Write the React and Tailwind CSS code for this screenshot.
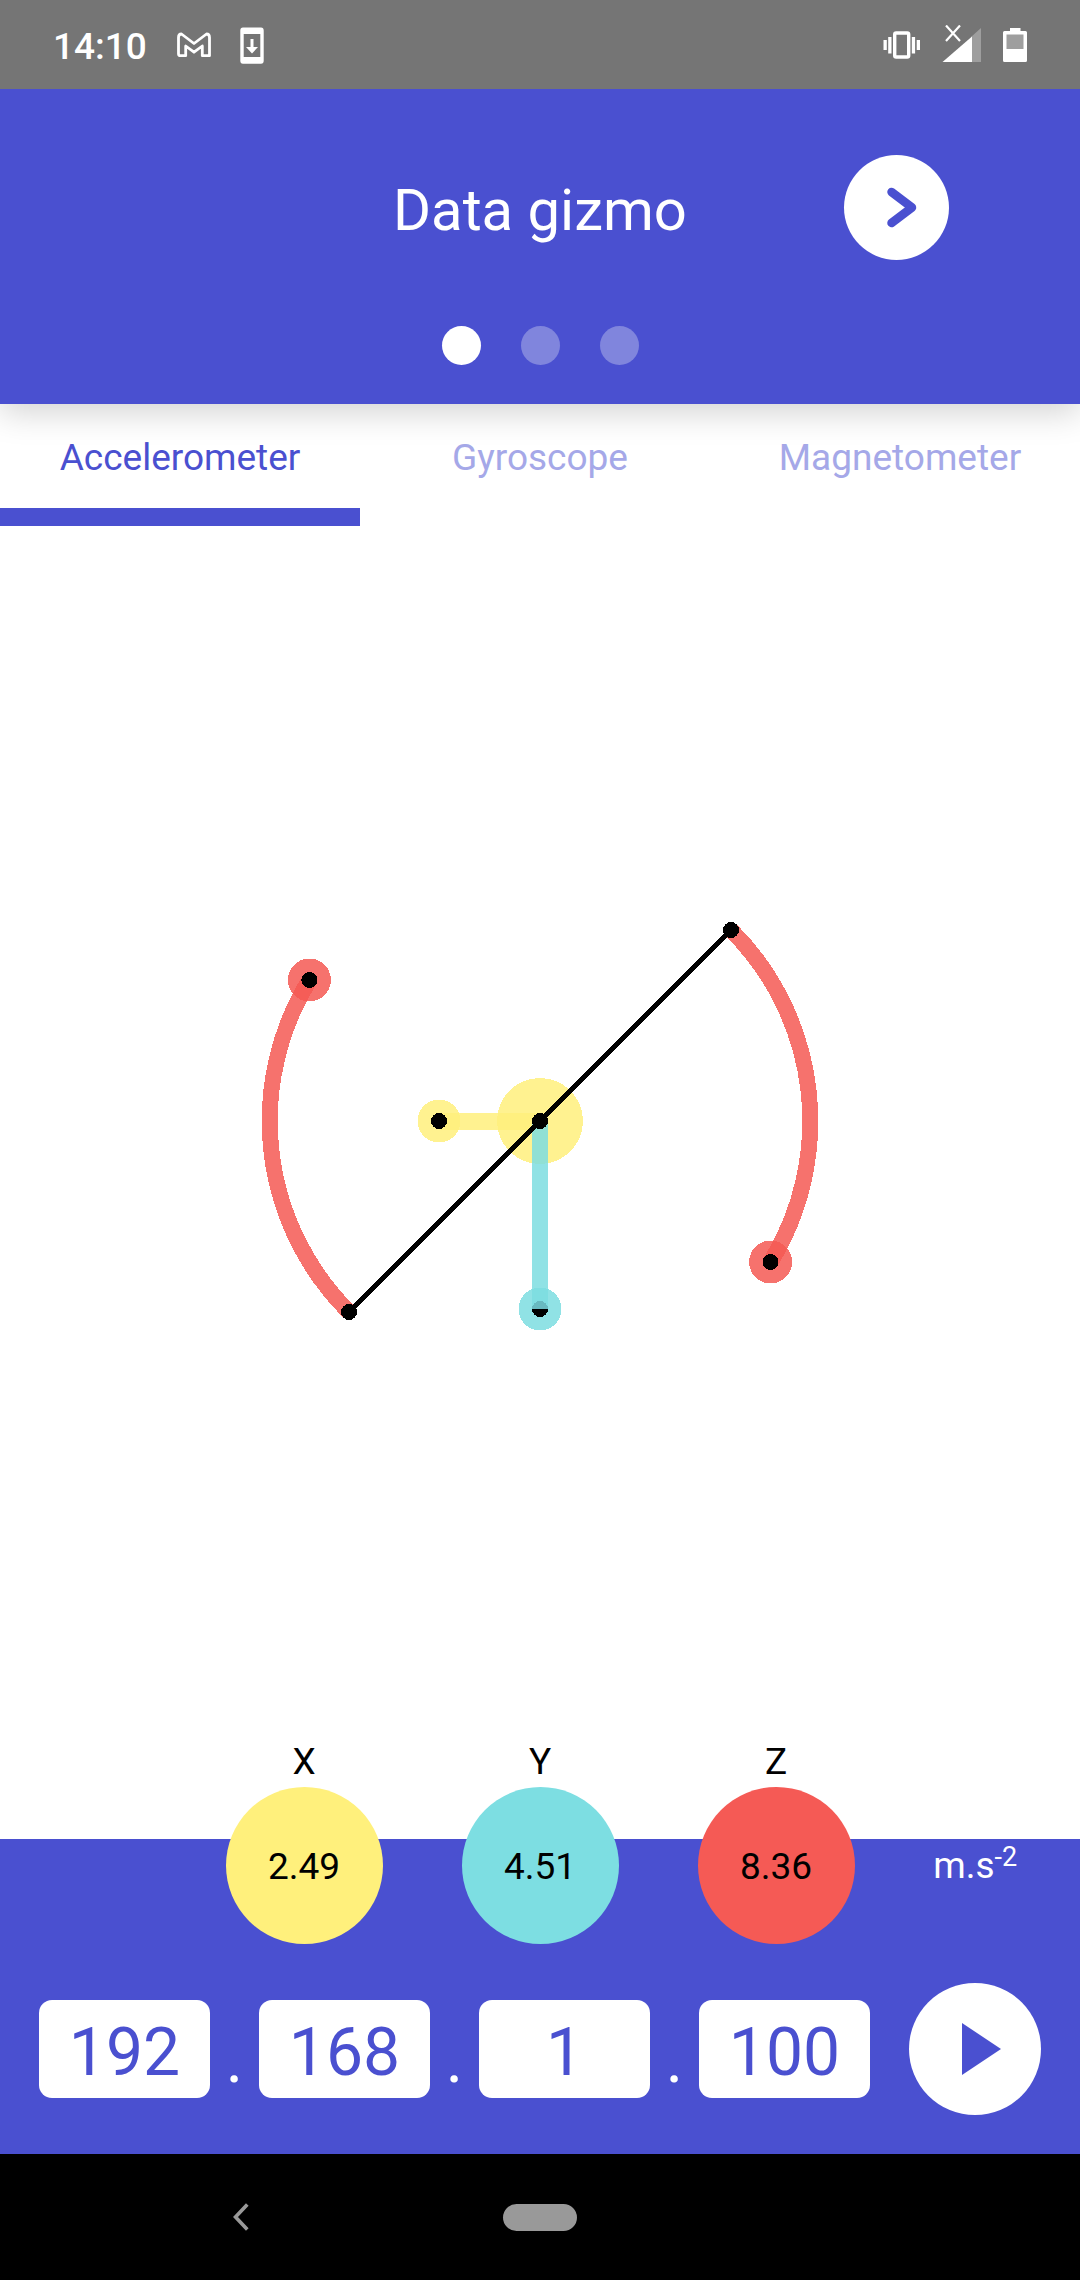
import React, { useState } from "react";

const TABS = ["Accelerometer", "Gyroscope", "Magnetometer"];

const READINGS = [
  { axis: "X", value: "2.49", color: "bg-[#fff07c]" },
  { axis: "Y", value: "4.51", color: "bg-[#7ddee2]" },
  { axis: "Z", value: "8.36", color: "bg-[#f55a55]" },
];

function GmailIcon() {
  return (
    <svg className="h-10 w-[34px]" viewBox="177 24 34 40" fill="none" aria-hidden="true">
      <path
        d="M178.500 36.500 Q178.500 33 181.500 33 L194 42.500 L206.500 33 Q209.500 33 209.500 36.500 V54.700 H202.300 V45 L194 51.200 L185.700 45 V54.700 H180.500 Q178.500 54.700 178.500 52.700 Z"
        stroke="#fff"
        strokeWidth="2.800"
        strokeLinejoin="round"
      />
    </svg>
  );
}

function DownloadIcon() {
  return (
    <svg className="h-10 w-6" viewBox="240 24 24 40" aria-hidden="true">
      <path
        fill="#fff"
        fillRule="evenodd"
        d="M243 26.500 H261 Q263.700 26.500 263.700 29.500 V59.700 Q263.700 62.700 261 62.700 H243 Q240.300 62.700 240.300 59.700 V29.500 Q240.300 26.500 243 26.500 Z M243.700 33 V56 H260.300 V33 Z"
      />
      <path fill="#fff" d="M250.500 38 H253.500 V46 H258 L252 52.500 L246 46 H250.500 Z" />
    </svg>
  );
}

function VibrateIcon() {
  return (
    <svg className="h-10 w-[38px]" viewBox="883.500 24 38 40" fill="#fff" aria-hidden="true">
      <rect x="884" y="39" width="3.300" height="10" />
      <rect x="888.700" y="36" width="3.300" height="16.500" />
      <rect x="912.300" y="36" width="3.300" height="16.500" />
      <rect x="917.200" y="39" width="3.300" height="10" />
      <rect x="895.200" y="32" width="14" height="24" rx="1.500" fill="none" stroke="#fff" strokeWidth="3.400" />
    </svg>
  );
}

function SignalIcon() {
  return (
    <svg className="h-10 w-10" viewBox="943 24 40 40" aria-hidden="true">
      <path fill="#9e9e9e" d="M982 27 V61 H972 V36 Z" />
      <path fill="#fff" d="M973 35.500 V61 H943.500 Z" />
      <path d="M947 24.500 L961 40 M961 24.500 L947 40" stroke="#fff" strokeWidth="2.200" />
    </svg>
  );
}

function BatteryIcon() {
  return (
    <svg className="h-10 w-6" viewBox="1003 24 24 40" aria-hidden="true">
      <path
        fill="#fff"
        d="M1010 27 H1020.500 V30 H1025.500 Q1027 30 1027 31.500 V59.500 Q1027 61 1025.500 61 H1004.500 Q1003 61 1003 59.500 V31.500 Q1003 30 1004.500 30 H1010 Z"
      />
      <rect x="1006.500" y="33.500" width="17" height="14.500" fill="#9e9e9e" />
    </svg>
  );
}

function StatusBar() {
  return (
    <div className="relative z-20 flex h-[89px] items-center justify-between bg-[#757575] px-[53px] text-white">
      <div className="flex items-center">
        <span className="pt-[3px] text-[37px] leading-none font-medium">14:10</span>
        <span className="ml-[30px] flex items-center gap-[29px]">
          <GmailIcon />
          <DownloadIcon />
        </span>
      </div>
      <div className="flex items-center gap-[21px]">
        <VibrateIcon />
        <SignalIcon />
        <BatteryIcon />
      </div>
    </div>
  );
}

function Header() {
  return (
    <header className="relative z-10 bg-[#4a50d0] px-[131px] pt-[66px] pb-[39px] shadow-[0_8px_32px_rgba(0,0,0,0.18)]">
      <div className="grid grid-cols-[1fr_auto_1fr] items-center">
        <span />
        <h1 className="pt-1 text-[58px] leading-none text-white">Data gizmo</h1>
        <button type="button" aria-label="Next" className="size-[105px] justify-self-end rounded-full bg-white">
          <svg className="size-full" viewBox="0 0 105 105" fill="none" aria-hidden="true">
            <path
              d="M47.500 37 L68 52.500 L47.500 68"
              stroke="#4a50d0"
              strokeWidth="8.500"
              strokeLinecap="round"
              strokeLinejoin="round"
            />
          </svg>
        </button>
      </div>
      <div className="mt-[66px] flex justify-center gap-10">
        <span className="size-[39px] rounded-full bg-white" />
        <span className="size-[39px] rounded-full bg-[#8085dd]" />
        <span className="size-[39px] rounded-full bg-[#8085dd]" />
      </div>
    </header>
  );
}

function Tabs() {
  const [active, setActive] = useState(0);
  return (
    <div role="tablist" className="grid grid-cols-3">
      {TABS.map((name, i) => (
        <button
          key={name}
          type="button"
          role="tab"
          aria-selected={active === i}
          onClick={() => setActive(i)}
          className={
            "h-[122px] border-b-[18px] pt-0.5 text-[37px] leading-none " +
            (active === i ? "border-[#4a50d0] text-[#4a50d0]" : "border-transparent text-[#a5a8e8]")
          }
        >
          {name}
        </button>
      ))}
    </div>
  );
}

function Gizmo() {
  return (
    <svg
      className="h-[420px] w-[560px] max-w-full"
      viewBox="-280 -210 560 420"
      shapeRendering="crispEdges"
      role="img"
      aria-label="Acceleration vector"
    >
      <g fill="#fff07c" fillOpacity="0.85">
        <circle cx="-101" cy="0" r="21.500" />
        <circle cx="0" cy="0" r="43" />
        <rect x="-101" y="-8.500" width="101" height="17" />
      </g>
      <g fill="none" stroke="#f55953" strokeOpacity="0.85" strokeWidth="16">
        <path d="M-191 191 A270 270 0 0 1 -230.600 -141" />
        <path d="M191 -191 A270 270 0 0 1 230.600 141" />
      </g>
      <g fill="#f55953" fillOpacity="0.85">
        <circle cx="-230.600" cy="-141" r="21.500" />
        <circle cx="230.600" cy="141" r="21.500" />
      </g>
      <g fill="#7ddde1" fillOpacity="0.85">
        <rect x="-8" y="0" width="16" height="188" />
        <circle cx="0" cy="188" r="21.500" />
      </g>
      <path d="M-8 188 A8 8 0 0 1 8 188 Z" fill="#69bac0" />
      <path d="M-8 188 A8 8 0 0 0 8 188 Z" />
      <path d="M-191 191 L191 -191" stroke="#000" strokeWidth="4.600" />
      <circle cx="-101" cy="0" r="8" />
      <circle cx="0" cy="0" r="8" />
      <circle cx="-191" cy="191" r="8" />
      <circle cx="191" cy="-191" r="8" />
      <circle cx="-230.600" cy="-141" r="8" />
      <circle cx="230.600" cy="141" r="8" />
    </svg>
  );
}

function Readings() {
  return (
    <div className="-mt-[103px] grid grid-cols-[1fr_auto_1fr] items-end">
      <span />
      <div className="flex gap-[79px]">
        {READINGS.map((r) => (
          <div key={r.axis} className="flex flex-col items-center text-[37px] text-black">
            <span className="leading-[51px]">{r.axis}</span>
            <span className={"flex size-[157px] items-center justify-center rounded-full pt-0.5 leading-none " + r.color}>
              {r.value}
            </span>
          </div>
        ))}
      </div>
      <div className="flex h-[157px] items-center justify-center pl-4 text-[37px] leading-none text-white">
        <span>
          m.s<sup className="-top-3 text-[27px]">-2</sup>
        </span>
      </div>
    </div>
  );
}

function AddressBar() {
  const [parts, setParts] = useState(["192", "168", "1", "100"]);
  return (
    <form className="mt-[39px] flex items-center gap-[39px] px-[39px]" onSubmit={(e) => e.preventDefault()}>
      <div className="flex min-w-0 flex-1 items-center">
        {parts.map((part, i) => (
          <React.Fragment key={i}>
            {i > 0 && (
              <span className="w-[49px] shrink-0 self-end text-center text-[66px] leading-[77px] text-white">.</span>
            )}
            <input
              aria-label={"Address part " + (i + 1)}
              value={part}
              onChange={(e) => setParts(parts.map((p, j) => (j === i ? e.target.value : p)))}
              className="h-[98px] w-full min-w-0 rounded-[13px] bg-white pt-1.5 text-center text-[66px] leading-none text-[#4a50d0] outline-none"
            />
          </React.Fragment>
        ))}
      </div>
      <button type="submit" aria-label="Play" className="size-[132px] shrink-0 rounded-full bg-white">
        <svg className="size-full" viewBox="0 0 132 132" aria-hidden="true">
          <path d="M53 40 L92 66 L53 92 Z" fill="#4a50d0" />
        </svg>
      </button>
    </form>
  );
}

function NavBar() {
  return (
    <nav className="grid h-[126px] grid-cols-[1fr_auto_1fr] items-center bg-black">
      <div className="flex justify-center pr-[22px]">
        <button type="button" aria-label="Back" className="flex size-12 items-center justify-center">
          <svg className="h-7 w-4" viewBox="0 0 16 28" fill="none" aria-hidden="true">
            <path d="M14.300 1.500 L2.500 14 L14.300 26.500" stroke="#999" strokeWidth="3.600" />
          </svg>
        </button>
      </div>
      <button type="button" aria-label="Home" className="h-[27px] w-[74px] rounded-full bg-[#999999]" />
      <span />
    </nav>
  );
}

export default function App() {
  return (
    <div className="flex min-h-screen flex-col bg-white font-['Roboto',sans-serif]">
      <StatusBar />
      <Header />
      <Tabs />
      <main className="flex flex-1 items-center justify-center pb-[123px]">
        <Gizmo />
      </main>
      <footer className="bg-[#4a50d0] pb-[39px]">
        <Readings />
        <AddressBar />
      </footer>
      <NavBar />
    </div>
  );
}
